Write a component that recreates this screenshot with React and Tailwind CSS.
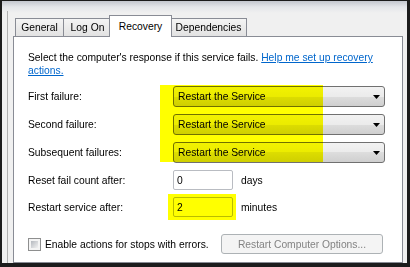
function Tab({ label, w, ml, selected }) {
  if (selected) {
    return (
      <div
        className={`relative z-10 ${ml} ${w} h-[22px] -mb-px flex items-center justify-center border-t border-l border-r border-[#898c95] bg-white`}
      >
        {label}
      </div>
    );
  }
  return (
    <div
      className={`${ml} ${w} h-[18px] flex items-center justify-center border-t border-l border-r border-[#898c95] bg-[linear-gradient(to_bottom,#f4f4f4,#e2e2e2)]`}
    >
      {label}
    </div>
  );
}

function Combo() {
  return (
    <div className="w-[212px] h-[21px] rounded-[3px] border border-[#707070] bg-[linear-gradient(to_bottom,#f2f2f2_0%,#ebebeb_50%,#dddddd_50%,#cfcfcf_100%)] flex items-center pl-[4px] pr-[4px]">
      <span className="flex-1">Restart the Service</span>
      <svg width="7" height="4" viewBox="0 0 7 4">
        <path d="M0 0h7L3.5 4z" fill="#000" />
      </svg>
    </div>
  );
}

function Row({ label, children }) {
  return (
    <div className="flex items-center">
      <div className="w-[145px]">{label}</div>
      {children}
    </div>
  );
}

function NumBox({ value }) {
  return (
    <div className="w-[60px] h-[20px] rounded-[2px] border border-[#b9bcc2] bg-white flex items-center pl-[3px]">
      {value}
    </div>
  );
}

export default function App() {
  return (
    <div
      className="w-[410px] h-[267px] overflow-hidden flex border-t border-l-2 border-r-[3px] border-b-4 border-[#1c1c1c] bg-[linear-gradient(to_bottom,#c3c7cf_0px,#e4e6ea_6px,#f0f0f0_12px)] text-black text-[10.3px] leading-[13px]"
      style={{ fontFamily: '"Liberation Sans", Arial, sans-serif' }}
    >
      <div className="ml-[5px] mt-[10px] w-px bg-[#b0b0b0]" />
      <div className="ml-[5px] pt-[14px] flex flex-col">
        {/* tabs */}
        <div className="flex items-end ml-[2px]">
          <Tab label="General" w="w-[49px]" ml="ml-0" />
          <Tab label="Log On" w="w-[49px]" ml="-ml-px" />
          <Tab label="Recovery" w="w-[63px]" ml="-ml-[3px]" selected />
          <Tab label="Dependencies" w="w-[77px]" ml="-ml-[2px]" />
        </div>

        {/* panel */}
        <div className="relative w-[390px] h-[240px] border border-[#898c95] bg-white pl-[14px] pr-[17px] pt-[14px]">
          <p>
            Select the computer's response if this service fails.{" "}
            <span className="text-[#0066cc] underline">Help me set up recovery</span>{" "}
            <span className="text-[#0066cc] underline">actions.</span>
          </p>

          <div className="mt-[9px] flex flex-col gap-[7px]">
            <Row label="First failure:">
              <Combo />
            </Row>
            <Row label="Second failure:">
              <Combo />
            </Row>
            <Row label="Subsequent failures:">
              <Combo />
            </Row>
            <Row label="Reset fail count after:">
              <NumBox value="0" />
              <span className="ml-[8px]">days</span>
            </Row>
            <Row label="Restart service after:">
              <NumBox value="2" />
              <span className="ml-[8px]">minutes</span>
            </Row>
          </div>

          <div className="mt-[17px] flex items-center">
            <div className="w-[13px] h-[13px] border border-[#8e8f8f] bg-[#f4f4f4] p-[2px]">
              <div className="w-full h-full bg-[linear-gradient(135deg,#b4b8be,#f2f2f2)]" />
            </div>
            <span className="ml-[4px]">Enable actions for stops with errors.</span>
            <div className="ml-auto mr-[2px] w-[162px] h-[20px] rounded-[3px] border border-[#adb2b5] bg-[#f4f4f4] text-[#838383] flex items-center justify-center">
              Restart Computer Options...
            </div>
          </div>

          {/* highlighter marks */}
          <div className="absolute left-[146px] top-[48px] w-[163px] h-[77px] bg-[#ffff00] mix-blend-multiply" />
          <div className="absolute left-[154px] top-[157px] w-[68px] h-[26px] bg-[#ffff00] mix-blend-multiply" />
        </div>
      </div>
    </div>
  );
}
